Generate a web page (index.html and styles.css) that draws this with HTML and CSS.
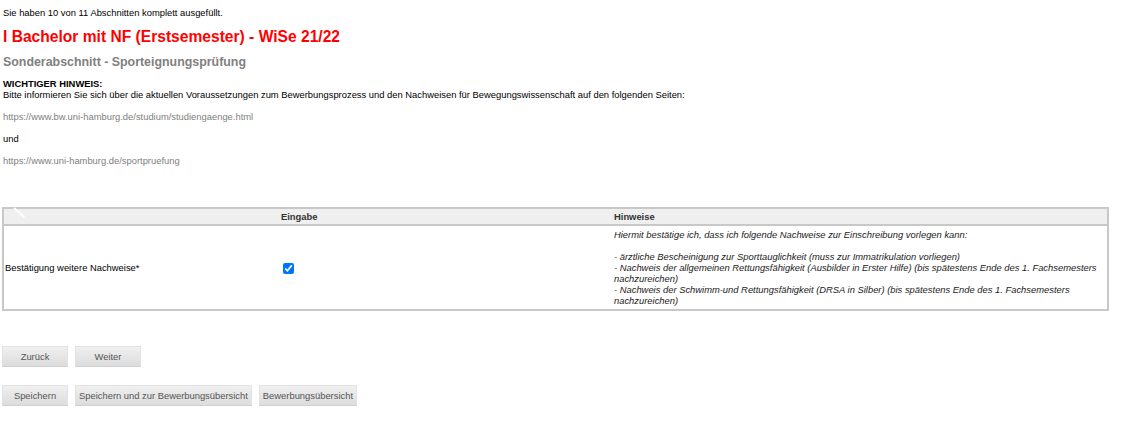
FILE: index.html
```html
<!DOCTYPE html>
<html lang="de">
<head>
  <meta charset="UTF-8" />
  <title>Bewerbung - Sonderabschnitt</title>
  <link rel="stylesheet" href="styles.css">
</head>
<body>
  <p class="status">Sie haben 10 von 11 Abschnitten komplett ausgefüllt.</p>

  <h1 class="title">I Bachelor mit NF (Erstsemester) - WiSe 21/22</h1>
  <h2 class="subtitle">Sonderabschnitt - Sporteignungsprüfung</h2>

  <div class="notice">
    <p class="notice-head"><b>WICHTIGER HINWEIS:</b><br>Bitte informieren Sie sich über die aktuellen Voraussetzungen zum Bewerbungsprozess und den Nachweisen für Bewegungswissenschaft auf den folgenden Seiten:</p>
    <p class="link">https://www.bw.uni-hamburg.de/studium/studiengaenge.html</p>
    <p>und</p>
    <p class="link">https://www.uni-hamburg.de/sportpruefung</p>
  </div>

  <table class="form-table">
    <thead>
      <tr>
        <th class="col-label"><span class="corner-mark"></span></th>
        <th class="col-input">Eingabe</th>
        <th class="col-hint">Hinweise</th>
      </tr>
    </thead>
    <tbody>
      <tr>
        <td class="col-label">Bestätigung weitere Nachweise*</td>
        <td class="col-input"><input type="checkbox" checked></td>
        <td class="col-hint hint">Hiermit bestätige ich, dass ich folgende Nachweise zur Einschreibung vorlegen kann:<br><br>- ärztliche Bescheinigung zur Sporttauglichkeit (muss zur Immatrikulation vorliegen)<br>- Nachweis der allgemeinen Rettungsfähigkeit (Ausbilder in Erster Hilfe) (bis spätestens Ende des 1. Fachsemesters nachzureichen)<br>- Nachweis der Schwimm-und Rettungsfähigkeit (DRSA in Silber) (bis spätestens Ende des 1. Fachsemesters nachzureichen)</td>
      </tr>
    </tbody>
  </table>

  <div class="btn-row nav-row">
    <button class="btn">Zurück</button>
    <button class="btn">Weiter</button>
  </div>

  <div class="btn-row">
    <button class="btn">Speichern</button>
    <button class="btn">Speichern und zur Bewerbungsübersicht</button>
    <button class="btn">Bewerbungsübersicht</button>
  </div>
</body>
</html>
```

FILE: styles.css
```css
* {
  box-sizing: border-box;
}
body {
  font-family: "Liberation Sans", Arial, sans-serif;
  font-size: 9.4px;
  line-height: 11px;
  margin: 0;
  padding: 7px 2px;
  background: #fff;
  color: #000;
}
p {
  margin: 0;
}
.status {
  padding-left: 1px;
}
.title {
  color: #ff0000;
  font-size: 15.6px;
  line-height: 20px;
  margin: 9px 0 0 1px;
}
.subtitle {
  color: #808080;
  font-size: 12.4px;
  line-height: 16px;
  margin: 7px 0 0 1px;
}
.notice {
  margin-top: 8px;
  padding-left: 1px;
}
.notice p {
  margin-bottom: 11px;
}
.link {
  color: #808080;
}
.form-table {
  margin-top: 41px;
  width: 1107px;
  border-collapse: collapse;
  border: 2px solid #c8c8c8;
}
.form-table th {
  background: #efefef;
  color: #333;
  font-weight: bold;
  text-align: left;
  height: 17px;
  padding: 1px 2px;
  border-bottom: 2px solid #c8c8c8;
}
.form-table th.col-label {
  position: relative;
}
.corner-mark {
  position: absolute;
  left: 10px;
  top: -2px;
  width: 14px;
  height: 2px;
  background: #fff;
  transform: rotate(42deg);
  transform-origin: left center;
}
.form-table td {
  padding: 2px 1px;
  vertical-align: middle;
}
.col-label {
  width: 276px;
}
.col-input {
  width: 333px;
}
.form-table td.col-input {
  padding-left: 3px;
}
.form-table td.col-input input {
  margin: 0 0 0 1px;
  width: 11px;
  height: 11px;
  vertical-align: middle;
}
.form-table td.hint {
  font-style: italic;
  color: #222;
  padding: 3px 8px 3px 2px;
}
.btn-row {
  display: flex;
  gap: 7px;
}
.nav-row {
  margin-top: 35px;
  margin-bottom: 18px;
}
.btn {
  font-family: inherit;
  font-size: 9.4px;
  color: #555;
  height: 21px;
  min-width: 66px;
  padding: 0 3px;
  border: 1px solid #e2e2e2;
  border-bottom-color: #d0d0d0;
  border-radius: 0;
  background: linear-gradient(#f0f0f0, #dcdcdc);
  cursor: pointer;
}
```
